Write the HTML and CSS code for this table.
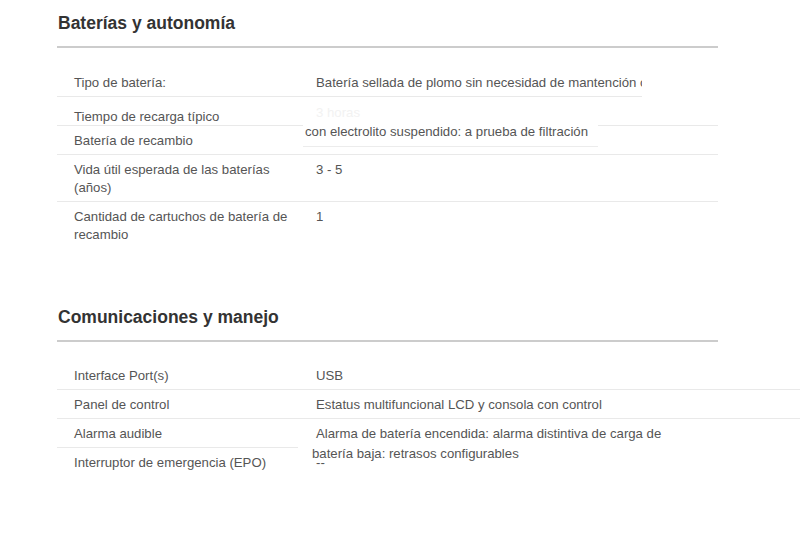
FILE: index.html
```html
<!DOCTYPE html>
<html lang="es">
<head>
<meta charset="utf-8">
<title>Especificaciones</title>
<link rel="stylesheet" href="styles.css">
</head>
<body>
<main class="page">
  <section class="spec spec-battery">
    <h2 class="spec-title">Baterías y autonomía</h2>
    <div class="spec-table">
      <div class="row row-first">
        <div class="label">Tipo de batería:</div>
        <div class="value value-clip">Batería sellada de plomo sin necesidad de mantención con</div>
      </div>
      <div class="row row-shifted">
        <div class="label">Tiempo de recarga típico</div>
        <div class="value value-ghost">3 horas</div>
      </div>
      <div class="row">
        <div class="label">Batería de recambio</div>
        <div class="value"></div>
      </div>
      <div class="row">
        <div class="label">Vida útil esperada de las baterías (años)</div>
        <div class="value">3 - 5</div>
      </div>
      <div class="row row-last">
        <div class="label">Cantidad de cartuchos de batería de recambio</div>
        <div class="value">1</div>
      </div>
      <div class="spill spill-battery">con electrolito suspendido: a prueba de filtración</div>
    </div>
  </section>

  <section class="spec spec-comms">
    <h2 class="spec-title">Comunicaciones y manejo</h2>
    <div class="spec-table spec-table-wide">
      <div class="row">
        <div class="label">Interface Port(s)</div>
        <div class="value">USB</div>
      </div>
      <div class="row">
        <div class="label">Panel de control</div>
        <div class="value">Estatus multifuncional LCD y consola con control</div>
      </div>
      <div class="row">
        <div class="label">Alarma audible</div>
        <div class="value">Alarma de batería encendida: alarma distintiva de carga de</div>
      </div>
      <div class="row row-last">
        <div class="label">Interruptor de emergencia (EPO)</div>
        <div class="value">--</div>
      </div>
      <div class="spill spill-comms">batería baja: retrasos configurables</div>
    </div>
  </section>
</main>
</body>
</html>
```

FILE: styles.css
```css
* {
  box-sizing: border-box;
}

html, body {
  margin: 0;
  padding: 0;
  background: #ffffff;
  overflow: hidden;
}

body {
  font-family: "Liberation Sans", Arial, sans-serif;
  font-size: 13.2px;
  color: #555555;
}

.page {
  padding: 12px 0 0 57px;
}

.spec-title {
  width: 661px;
  margin: 0;
  padding: 0 0 12px 1px;
  font-size: 17.5px;
  line-height: 22px;
  font-weight: bold;
  color: #333333;
  border-bottom: 2px solid #cccccc;
}

.spec-table {
  position: relative;
  width: 661px;
  margin-top: 20px;
}

.spec-table-wide {
  width: 743px;
  margin-top: 19px;
}

.spec-comms {
  margin-top: 58px;
}

.row {
  display: grid;
  grid-template-columns: 243px 1fr;
  border-bottom: 1px solid #e9e9e9;
  line-height: 18px;
}

.row-first {
  width: 585px;
}

.row-last {
  border-bottom: none;
}

.row-shifted {
  height: 29px;
}

.row-shifted .label {
  padding-top: 11px;
  padding-bottom: 0;
}

.label {
  padding: 6px 8px 4px 17px;
}

.value {
  padding: 6px 8px 4px 16px;
  min-height: 28px;
}

.value-clip {
  white-space: nowrap;
  overflow: hidden;
  padding-right: 0;
}

.value-ghost {
  color: #f2f2f2;
  padding-top: 7px;
}

.spill {
  position: absolute;
  background: #ffffff;
  line-height: 18px;
  white-space: nowrap;
}

.spill-battery {
  left: 246px;
  top: 52px;
  width: 295px;
  height: 27px;
  padding: 3px 0 0 2px;
  border-bottom: 1px solid #ececec;
}

.spill-comms {
  left: 241px;
  top: 84px;
  width: 502px;
  height: 18px;
  padding-left: 14px;
}
```
